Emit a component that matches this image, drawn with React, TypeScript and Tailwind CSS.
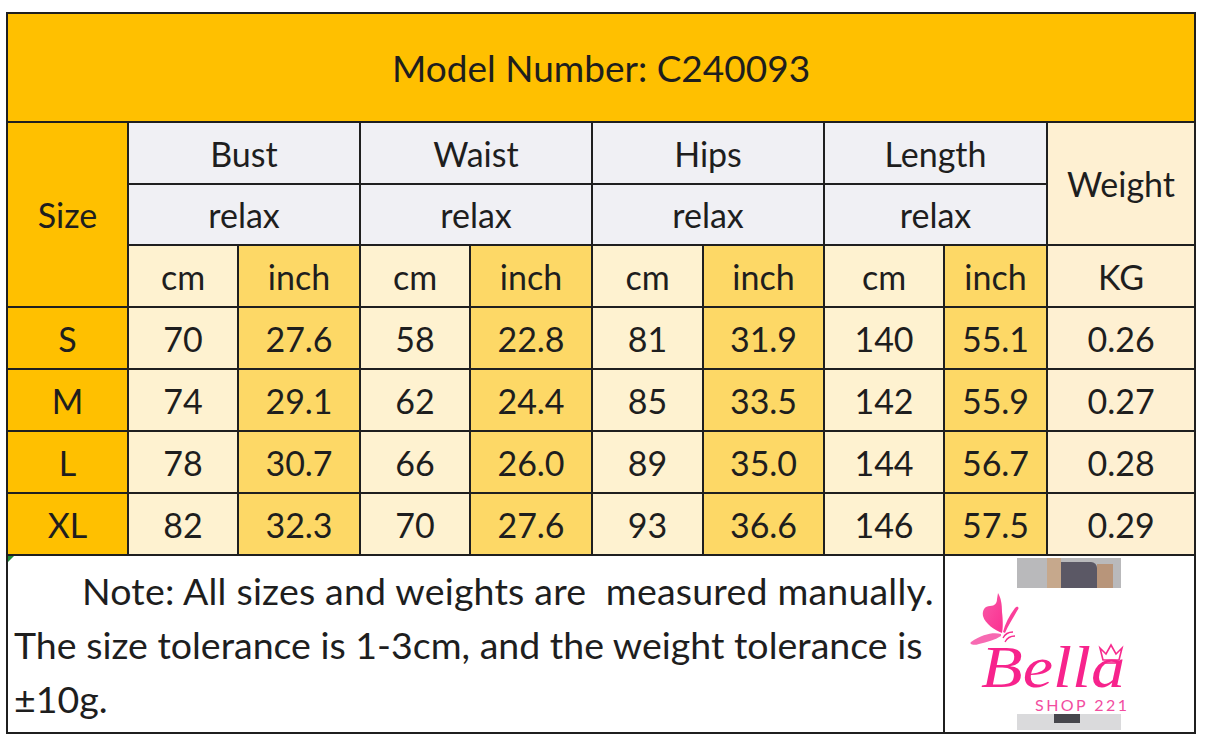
import React from 'react'

const font = { fontFamily: 'Lato, "Open Sans", sans-serif' }

const widths = [121, 110, 122, 110, 122, 111, 121, 120, 103, 148]

const rows = [
  ['S', '70', '27.6', '58', '22.8', '81', '31.9', '140', '55.1', '0.26'],
  ['M', '74', '29.1', '62', '24.4', '85', '33.5', '142', '55.9', '0.27'],
  ['L', '78', '30.7', '66', '26.0', '89', '35.0', '144', '56.7', '0.28'],
  ['XL', '82', '32.3', '70', '27.6', '93', '36.6', '146', '57.5', '0.29'],
]

const cell = 'border-2 border-[#1f1f1f] text-center align-middle p-0'

const Logo = () => (
  <div className="relative w-full h-[176px]">
    {/* photo strips */}
    <div className="absolute left-[72px] top-[2px] w-[104px] h-[30px] bg-[#b9b9bb] overflow-hidden">
      <div className="absolute left-[36px] top-[4px] w-[44px] h-[26px] rounded-t-[6px] bg-[#5b5865]" />
      <div className="absolute left-[30px] top-0 w-[14px] h-[30px] bg-[#c6a88c]" />
      <div className="absolute left-[80px] top-[6px] w-[16px] h-[24px] bg-[#b8957a]" />
    </div>
    <div className="absolute left-[72px] top-[158px] w-[104px] h-[16px] bg-[#dadadc] overflow-hidden">
      <div className="absolute left-[37px] top-0 w-[26px] h-[9px] bg-[#47474d]" />
    </div>
    <svg className="absolute left-0 top-0" width="250" height="176" viewBox="0 0 250 176">
      <defs>
        <linearGradient id="wing" x1="0" y1="0" x2="1" y2="1">
          <stop offset="0" stopColor="#f85aa8" />
          <stop offset="1" stopColor="#fb2f90" />
        </linearGradient>
      </defs>
      {/* butterfly */}
      <path
        d="M57 77 C50 74 40 68 38 60 C37 54 40 50 45 50 C50 50 52 47 52 43 L53 37 C56 42 57 48 57 56 C58 64 58 72 57 77 Z"
        fill="url(#wing)"
      />
      <path d="M58 76 C60 68 64 60 70 52 C73 49 75 52 72 55 C68 62 63 70 60 77 Z" fill="#fb3f9a" />
      <path d="M56 78 C48 76 38 78 26 86 C24 88 28 90 34 88 C42 86 50 84 56 80 Z" fill="#f76ab2" />
      <path d="M58 82 C60 78 64 76 68 76 M60 86 C62 82 66 80 70 80" stroke="#f72a8e" strokeWidth="1.3" fill="none" />
      {/* crown */}
      <path
        d="M158 104 L155 92 L161 98 L166 89 L171 98 L177 92 L174 104 Z"
        fill="none"
        stroke="#f72a8e"
        strokeWidth="1.6"
      />
      <line x1="157" y1="107" x2="175" y2="107" stroke="#f72a8e" strokeWidth="1.6" />
      <text
        x="36"
        y="131"
        fill="#f7238c"
        fontFamily="'Liberation Serif', 'DejaVu Serif', serif"
        fontStyle="italic"
        fontSize="60"
        textLength="144"
        lengthAdjust="spacingAndGlyphs"
      >
        Bella
      </text>
      <text
        x="90"
        y="155"
        fill="#f24d9f"
        fontFamily="Lato, 'Open Sans', sans-serif"
        fontSize="16"
        textLength="92"
      >
        SHOP 221
      </text>
    </svg>
  </div>
)

export default function App() {
  return (
    <div className="bg-white w-[1206px] h-[749px] pt-[12px] pl-[6px] text-[#1e1e1e]" style={font}>
      <table className="table-fixed border-collapse w-[1190px]">
        <colgroup>
          {widths.map((w, i) => (
            <col key={i} style={{ width: w }} />
          ))}
        </colgroup>
        <tbody>
          <tr className="h-[109px]">
            <td colSpan={10} className={`${cell} bg-[#ffc000] text-[37px]`}>
              Model Number: C240093
            </td>
          </tr>
          <tr className="h-[62px]">
            <td rowSpan={3} className={`${cell} bg-[#ffc000] text-[34px]`}>
              Size
            </td>
            {['Bust', 'Waist', 'Hips', 'Length'].map((t) => (
              <td key={t} colSpan={2} className={`${cell} bg-[#f0f0f4] text-[34px]`}>
                {t}
              </td>
            ))}
            <td rowSpan={2} className={`${cell} bg-[#fef0d2] text-[34px]`}>
              Weight
            </td>
          </tr>
          <tr className="h-[61px]">
            {['b', 'w', 'h', 'l'].map((k) => (
              <td key={k} colSpan={2} className={`${cell} bg-[#f0f0f4] text-[34px]`}>
                relax
              </td>
            ))}
          </tr>
          <tr className="h-[62px]">
            {[0, 1, 2, 3].map((k) => (
              <React.Fragment key={k}>
                <td className={`${cell} bg-[#fef2d0] text-[34px]`}>cm</td>
                <td className={`${cell} bg-[#fdd866] text-[34px]`}>inch</td>
              </React.Fragment>
            ))}
            <td className={`${cell} bg-[#fef0d2] text-[34px]`}>KG</td>
          </tr>
          {rows.map((r) => (
            <tr key={r[0]} className="h-[62px]">
              {r.map((v, i) => {
                let bg = 'bg-[#fef2d0]'
                if (i === 0) bg = 'bg-[#ffc000]'
                else if (i === 9) bg = 'bg-[#fef0d2]'
                else if (i % 2 === 0) bg = 'bg-[#fdd866]'
                return (
                  <td key={i} className={`${cell} ${bg} text-[34px]`}>
                    {v}
                  </td>
                )
              })}
            </tr>
          ))}
          <tr className="h-[178px]">
            <td colSpan={8} className={`${cell} relative bg-white text-left align-top`}>
              <div className="absolute left-0 top-0 w-0 h-0 border-t-[6px] border-r-[6px] border-t-[#1f8a3a] border-r-transparent" />
              <div className="pl-[6px] pt-[8px] text-[37.5px] leading-[54px] whitespace-nowrap">
                <span className="pl-[68px] tracking-[0.2px]">Note: All sizes and weights are&nbsp;&nbsp;measured manually.</span>
                <br />
                The size tolerance is 1-3cm, and the weight tolerance is
                <br />
                ±10g.
              </div>
            </td>
            <td colSpan={2} className={`${cell} bg-white align-top`}>
              <Logo />
            </td>
          </tr>
        </tbody>
      </table>
    </div>
  )
}
